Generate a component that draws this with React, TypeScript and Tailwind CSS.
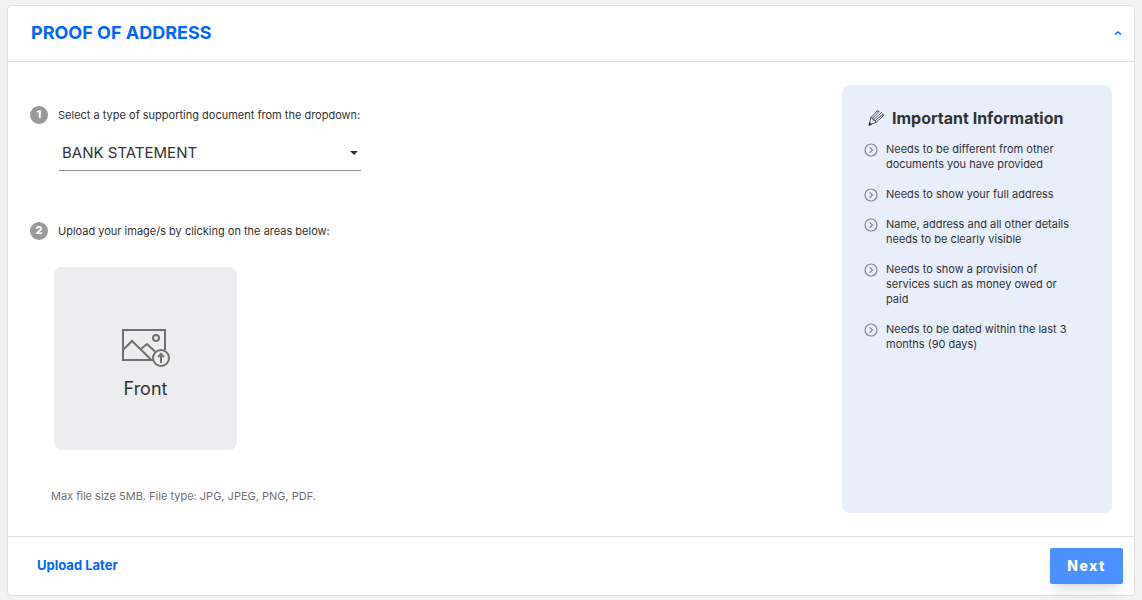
import { useState } from "react";
import { ChevronUp } from "lucide-react";

const REQUIREMENTS = [
  "Needs to be different from other documents you have provided",
  "Needs to show your full address",
  "Name, address and all other details needs to be clearly visible",
  "Needs to show a provision of services such as money owed or paid",
  "Needs to be dated within the last 3 months (90 days)",
];

const DOCUMENT_TYPES = ["BANK STATEMENT", "UTILITY BILL", "COUNCIL TAX BILL"];

function StepNumber({ value }: { value: number }) {
  return (
    <span className="flex size-[18px] shrink-0 items-center justify-center rounded-full bg-[#999999] pb-[3px] text-[11px] leading-4 font-extrabold text-white">
      {value}
    </span>
  );
}

function UploadImageIcon() {
  return (
    <svg width="48" height="38" viewBox="0 0 48 38" fill="none" stroke="#707070" strokeWidth="2" aria-hidden="true">
      <path d="M43 21V1H1v30h30" />
      <path d="M1 21 10 12l19.500 19M19 20l6-5 8 7.500" />
      <circle cx="34" cy="9" r="3" />
      <circle cx="39" cy="29" r="8" />
      <path d="M39 34v-9M36 28l3-3 3 3" />
    </svg>
  );
}

function PencilIcon() {
  return (
    <svg width="16" height="16" viewBox="0 0 16 16" fill="none" stroke="#333333" strokeWidth="0.8" strokeLinejoin="round" strokeLinecap="round" aria-hidden="true">
      <path d="M9 1 3 7.500 1 15l7-2.500L15 6" />
      <path d="M3 7.500l1.800.5.4 2 2 .6.8 1.900M11 1.500 4.800 8M13.500 2.500 5.200 10M15 4 7.200 10.600" />
      <path d="M9 1q1.300-.6 2 .5M15 4q.8 1 0 2" />
      <path d="m1 15 .7-2.500 1.700 1.700z" fill="#333333" />
    </svg>
  );
}

function CircleArrowIcon() {
  return (
    <svg width="14" height="14" viewBox="0 0 14 14" fill="none" stroke="#858891" className="mt-px shrink-0" aria-hidden="true">
      <circle cx="7" cy="7" r="6" strokeWidth="1.2" />
      <path d="m5.500 4.200 3 2.800-3 2.800" strokeWidth="1.200" />
    </svg>
  );
}

export default function App() {
  const [open, setOpen] = useState(true);
  const [documentType, setDocumentType] = useState(DOCUMENT_TYPES[0]);

  return (
    <main className="min-h-screen bg-[#f2f2f2] px-[7px] py-[5px] font-['Inter',sans-serif] text-[#333333]">
      <section className="rounded-sm border border-[#e0e0e0] bg-white">
        <header className="flex h-14 items-center justify-between border-b border-[#e0e0e0] pr-[11px] pb-[2px] pl-[23px]">
          <h1 className="text-lg font-bold text-[#0066ff]">PROOF OF ADDRESS</h1>
          <button type="button" aria-label="Toggle section" aria-expanded={open} onClick={() => setOpen(!open)} className="text-[#0066ff]">
            <ChevronUp size={10} strokeWidth={3} />
          </button>
        </header>

        {open && (
          <div className="flex justify-between gap-6 px-[22px] py-[23px]">
            {/* Left: document type and upload steps */}
            <div className="pt-[21px] pb-[9px] text-[11px] leading-4">
              <div className="flex items-center gap-[10px]">
                <StepNumber value={1} />
                <label htmlFor="document-type">Select a type of supporting document from the dropdown:</label>
              </div>
              <div className="relative mt-[11px] ml-[29px] w-[302px]">
                <select
                  id="document-type"
                  value={documentType}
                  onChange={(e) => setDocumentType(e.target.value)}
                  className="h-9 w-full appearance-none border-b border-[#8c8c8c] px-[3px] text-[15px] leading-5"
                >
                  {DOCUMENT_TYPES.map((type) => (
                    <option key={type}>{type}</option>
                  ))}
                </select>
                <svg width="8" height="4" viewBox="0 0 8 4" className="pointer-events-none absolute top-4 right-[3px]" aria-hidden="true">
                  <path d="M0 0h8L4 4z" fill="#333333" />
                </svg>
              </div>

              <div className="mt-[51px] flex items-center gap-[10px]">
                <StepNumber value={2} />
                <p>Upload your image/s by clicking on the areas below:</p>
              </div>
              <button
                type="button"
                className="mt-[27px] ml-6 flex size-[183px] flex-col items-center justify-center gap-2 rounded-lg bg-[#ededef] pt-[14px] text-lg"
              >
                <UploadImageIcon />
                Front
              </button>
              <p className="mt-[38px] ml-[21px] text-[#707070]">Max file size 5MB. File type: JPG, JPEG, PNG, PDF.</p>
            </div>

            {/* Right: requirements */}
            <aside className="w-[270px] shrink-0 rounded-lg bg-[#e8eefc] pt-[21px] pr-[30px] pl-[22px]">
              <h2 className="flex items-center gap-2 pl-1 text-base font-bold">
                <PencilIcon />
                Important Information
              </h2>
              <ul className="mt-3 flex flex-col gap-[15px] text-[11px] leading-[15px]">
                {REQUIREMENTS.map((text) => (
                  <li key={text} className="flex gap-2">
                    <CircleArrowIcon />
                    {text}
                  </li>
                ))}
              </ul>
            </aside>
          </div>
        )}

        <footer className="flex h-[59px] items-center justify-between border-t border-[#e0e0e0] pr-[11px] pl-[29px]">
          <button type="button" className="text-[13px] font-bold text-[#0066ff]">
            Upload Later
          </button>
          <button type="button" className="h-9 w-[73px] rounded-xs bg-[#4a90ff] text-sm font-extrabold tracking-widest text-white shadow-lg shadow-black/10">
            Next
          </button>
        </footer>
      </section>
    </main>
  );
}
